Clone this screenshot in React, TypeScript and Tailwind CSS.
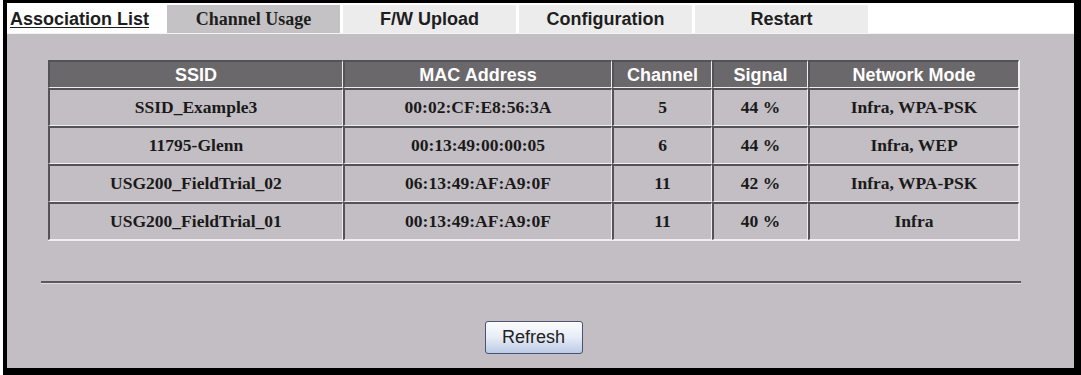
import React from 'react';

const rows = [
  { ssid: 'SSID_Example3', mac: '00:02:CF:E8:56:3A', channel: '5', signal: '44 %', mode: 'Infra, WPA-PSK' },
  { ssid: '11795-Glenn', mac: '00:13:49:00:00:05', channel: '6', signal: '44 %', mode: 'Infra, WEP' },
  { ssid: 'USG200_FieldTrial_02', mac: '06:13:49:AF:A9:0F', channel: '11', signal: '42 %', mode: 'Infra, WPA-PSK' },
  { ssid: 'USG200_FieldTrial_01', mac: '00:13:49:AF:A9:0F', channel: '11', signal: '40 %', mode: 'Infra' },
];

const narrow = { fontFamily: '"Liberation Sans Narrow", "Liberation Sans", Arial, sans-serif' };
const serif = { fontFamily: '"Liberation Serif", "Times New Roman", serif' };

function Tab({ label, active, serifFont }: { label: string; active?: boolean; serifFont?: boolean }) {
  return (
    <div
      className={`w-[173px] h-[28px] flex items-center justify-center font-bold text-[18px] text-[#1e1e1e] ${
        active ? 'bg-[#c4c2c4]' : 'bg-[#ececec]'
      }`}
      style={serifFont ? serif : narrow}
    >
      {label}
    </div>
  );
}

const cell = 'border-t-2 border-l-2 border-r border-b border-t-[#545256] border-l-[#545256] border-r-[#eeeeee] border-b-[#eeeeee] text-center';

export default function App() {
  return (
    <div className="w-[1081px] h-[375px] bg-white pl-[3px]">
      <div className="h-full flex flex-col border-t-[3px] border-l-4 border-r-[7px] border-b-[7px] border-black">
        {/* tabs */}
        <div className="h-[30px] flex items-end gap-[3px] bg-white">
          <div className="w-[157px] h-[28px] flex items-center pl-[3px]">
            <span className="font-bold text-[18px] leading-none text-[#1e1e1e] underline underline-offset-2" style={narrow}>
              Association List
            </span>
          </div>
          <Tab label="Channel Usage" active serifFont />
          <Tab label="F/W Upload" />
          <Tab label="Configuration" />
          <Tab label="Restart" />
        </div>

        {/* content */}
        <div className="flex-1 bg-[#c2bec3] border-t border-[#f4f4f4] pt-[26px] pl-[41px] pr-[53px] flex flex-col">
          <table className="w-[972px] border-separate border-spacing-0 border-r border-b border-[#eeeeee]">
            <thead>
              <tr className="h-[28px] bg-[#6b686c] text-white font-bold text-[18px] leading-none" style={narrow}>
                <th className={`${cell} w-[295px]`}>SSID</th>
                <th className={`${cell} w-[269px]`}>MAC Address</th>
                <th className={`${cell} w-[100px]`}>Channel</th>
                <th className={`${cell} w-[96px]`}>Signal</th>
                <th className={cell}>Network Mode</th>
              </tr>
            </thead>
            <tbody>
              {rows.map((r) => (
                <tr key={r.ssid} className="h-[38px] font-bold text-[17.5px] text-[#1a1a1a]" style={serif}>
                  <td className={cell}>{r.ssid}</td>
                  <td className={cell}>{r.mac}</td>
                  <td className={cell}>{r.channel}</td>
                  <td className={cell}>{r.signal}</td>
                  <td className={cell}>{r.mode}</td>
                </tr>
              ))}
            </tbody>
          </table>

          <div className="mt-[40px] -ml-[7px] w-[980px] h-[3px] border-t-2 border-[#5a585b] border-b border-b-[#e0dde0]" />

          <div className="flex justify-center mt-[37px] pr-[2px]">
            <button
              className="w-[98px] h-[33px] rounded-[3px] border border-[#4a5470] bg-gradient-to-b from-[#fbfcfe] via-[#e6ecf6] to-[#bccbe6] text-[18px] text-[#222]"
              style={{ fontFamily: '"Liberation Sans", Arial, sans-serif' }}
            >
              Refresh
            </button>
          </div>
        </div>
      </div>
    </div>
  );
}
